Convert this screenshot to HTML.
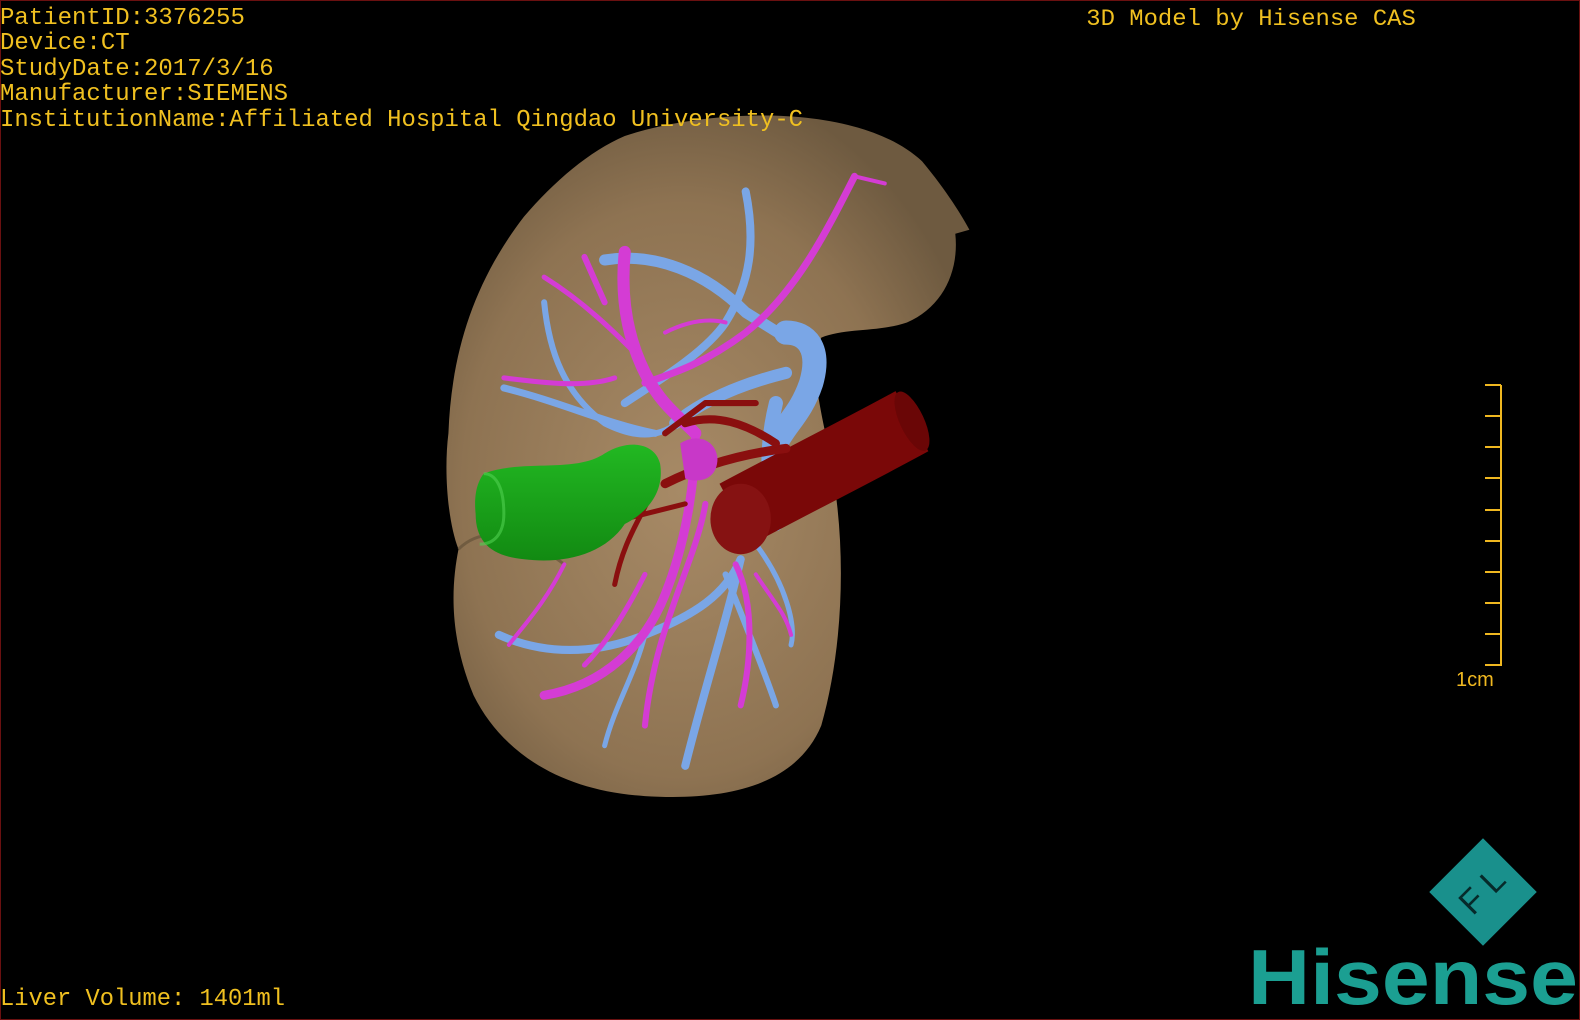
<!DOCTYPE html>
<html><head><meta charset="utf-8"><style>
html,body{margin:0;padding:0;background:#000;width:1580px;height:1020px;overflow:hidden}
svg{display:block}
</style></head><body>
<svg width="1580" height="1020" viewBox="0 0 1580 1020" xmlns="http://www.w3.org/2000/svg">
<defs>
<radialGradient id="lv" cx="0.45" cy="0.55" r="0.6">
<stop offset="0" stop-color="#a78a66"/><stop offset="0.7" stop-color="#8e7352"/><stop offset="1" stop-color="#6e5a40"/>
</radialGradient>
<linearGradient id="gr" x1="0" y1="0" x2="0" y2="1"><stop offset="0" stop-color="#22b822"/><stop offset="1" stop-color="#128a12"/></linearGradient>
</defs>
<rect x="0.5" y="0.5" width="1579" height="1019" fill="#000" stroke="#6a1010" stroke-width="1"/>
<g transform="scale(1.0077)">
<path d="M620,135 C700,108 850,100 915,160 C940,190 955,215 962,228 L948,232 C952,270 935,305 900,320 C870,330 840,325 815,335 C800,370 820,420 828,480 C840,560 835,650 815,720 C790,780 720,795 640,790 C560,785 500,750 470,690 C445,630 448,580 455,545 C445,520 440,470 445,430 C448,350 470,280 520,215 C550,180 585,150 620,135 Z" fill="url(#lv)"/>
<path d="M455,545 C480,520 520,530 560,560" stroke="#5e4c36" stroke-width="3" fill="none" opacity="0.6"/>
<g fill="none" stroke-linecap="round" stroke-linejoin="round">
<g stroke="#7aa6e6">
<path d="M600,258 C650,250 700,270 740,310 L780,335" stroke-width="11"/>
<path d="M740,190 C750,240 745,280 720,320 C700,350 650,380 620,400" stroke-width="8"/>
<path d="M780,330 C800,330 815,345 805,380 C795,410 780,420 770,440" stroke-width="24"/>
<path d="M540,300 C545,350 560,390 600,420 C640,440 660,430 680,415" stroke-width="6"/>
<path d="M500,385 C560,400 600,420 650,430" stroke-width="7"/>
<path d="M780,370 C740,380 700,395 670,420" stroke-width="12"/>
<path d="M735,555 C720,590 690,610 640,630 C590,650 540,650 495,630" stroke-width="8"/>
<path d="M735,555 C720,620 700,680 680,760" stroke-width="8"/>
<path d="M720,570 C740,620 760,670 770,700" stroke-width="6"/>
<path d="M750,540 C780,580 790,620 785,640" stroke-width="5"/>
<path d="M640,630 C630,670 610,700 600,740" stroke-width="5"/>
<path d="M770,400 C760,440 760,480 770,520" stroke-width="14"/>
</g>
<g stroke="#d43cd4">
<path d="M848,175 C820,230 790,290 740,330 C700,360 670,370 640,380" stroke-width="7"/>
<path d="M848,175 L878,182" stroke-width="4"/>
<path d="M620,250 C615,300 625,340 640,370 C655,400 670,410 690,430" stroke-width="12"/>
<path d="M540,275 C580,300 610,330 630,350" stroke-width="5"/>
<path d="M500,375 C540,380 580,385 610,375" stroke-width="5"/>
<path d="M580,255 L600,300" stroke-width="6"/>
<path d="M690,430 C690,480 680,540 660,590 C640,640 600,680 540,690" stroke-width="9"/>
<path d="M640,570 C620,610 600,640 580,660" stroke-width="5"/>
<path d="M700,500 C690,560 650,620 640,720" stroke-width="6"/>
<path d="M730,560 C750,600 745,660 735,700" stroke-width="6"/>
<path d="M750,570 C770,600 780,610 785,630" stroke-width="4"/>
<path d="M560,560 C540,600 520,620 505,640" stroke-width="4"/>
<path d="M660,330 C680,320 700,315 720,320" stroke-width="4"/>
</g>
<g stroke="#8a0f0f">
<path d="M730,510 C790,478 850,448 905,418" stroke-width="68" stroke="#7a0808" stroke-linecap="butt"/>
<path d="M660,480 C700,460 740,450 780,445" stroke-width="9"/>
<path d="M680,420 C710,410 740,420 770,440" stroke-width="8"/>
<path d="M660,430 L700,400 L750,400" stroke-width="6"/>
<path d="M650,480 C640,510 620,530 610,580" stroke-width="5"/>
<path d="M600,520 L680,500" stroke-width="5"/>
</g>
</g>
<ellipse cx="905" cy="418" rx="12" ry="32" fill="#6a0606" transform="rotate(-25 905 418)"/>
<ellipse cx="735" cy="515" rx="30" ry="35" fill="#861212"/>
<path d="M480,470 C520,455 570,470 600,450 C625,435 650,440 655,460 C660,490 640,510 620,520 C600,550 560,560 520,555 C490,552 472,540 472,510 C470,490 474,478 480,470 Z" fill="url(#gr)"/>
<path d="M480,470 C490,470 500,480 500,510 C500,530 490,540 476,540" stroke="#50d050" stroke-width="3" fill="none" opacity="0.6"/>
<path d="M675,440 C690,430 710,435 712,455 C712,475 695,480 680,475 Z" fill="#c838c8"/>
<text x="1078" y="25" font-family="Liberation Mono, monospace" font-size="23" fill="#f0c020" textLength="327" lengthAdjust="spacingAndGlyphs">3D Model by Hisense CAS</text>
</g>
<g font-family="Liberation Mono, monospace" font-size="24" fill="#f0c020">
<text x="0" y="24">PatientID:3376255</text>
<text x="0" y="49">Device:CT</text>
<text x="0" y="75">StudyDate:2017/3/16</text>
<text x="0" y="100">Manufacturer:SIEMENS</text>
<text x="0" y="126" textLength="803" lengthAdjust="spacingAndGlyphs">InstitutionName:Affiliated Hospital Qingdao University-C</text>
<text x="0" y="1005" textLength="285" lengthAdjust="spacingAndGlyphs">Liver Volume: 1401ml</text>
</g>
<g stroke="#f0b820" stroke-width="2">
<line x1="1501" y1="385" x2="1501" y2="666"/>
<line x1="1485" y1="385" x2="1501" y2="385"/><line x1="1485" y1="416" x2="1501" y2="416"/>
<line x1="1485" y1="447" x2="1501" y2="447"/><line x1="1485" y1="478" x2="1501" y2="478"/>
<line x1="1485" y1="510" x2="1501" y2="510"/><line x1="1485" y1="541" x2="1501" y2="541"/>
<line x1="1485" y1="572" x2="1501" y2="572"/><line x1="1485" y1="603" x2="1501" y2="603"/>
<line x1="1485" y1="634" x2="1501" y2="634"/><line x1="1485" y1="665" x2="1501" y2="665"/>
</g>
<text x="1456" y="686" font-family="Liberation Sans, sans-serif" font-size="20" fill="#f0b820">1cm</text>
<g transform="translate(1483,892) rotate(-45)">
<rect x="-38" y="-38" width="76" height="76" fill="#19908c"/>
<text x="0" y="10" text-anchor="middle" font-family="Liberation Sans, sans-serif" font-size="34" fill="#062a2a">F L</text>
</g>
<text x="1248" y="1004" font-family="Liberation Sans, sans-serif" font-weight="bold" font-size="78" fill="#1b9f92" textLength="330" lengthAdjust="spacingAndGlyphs">Hisense</text>
</svg>
</body></html>
